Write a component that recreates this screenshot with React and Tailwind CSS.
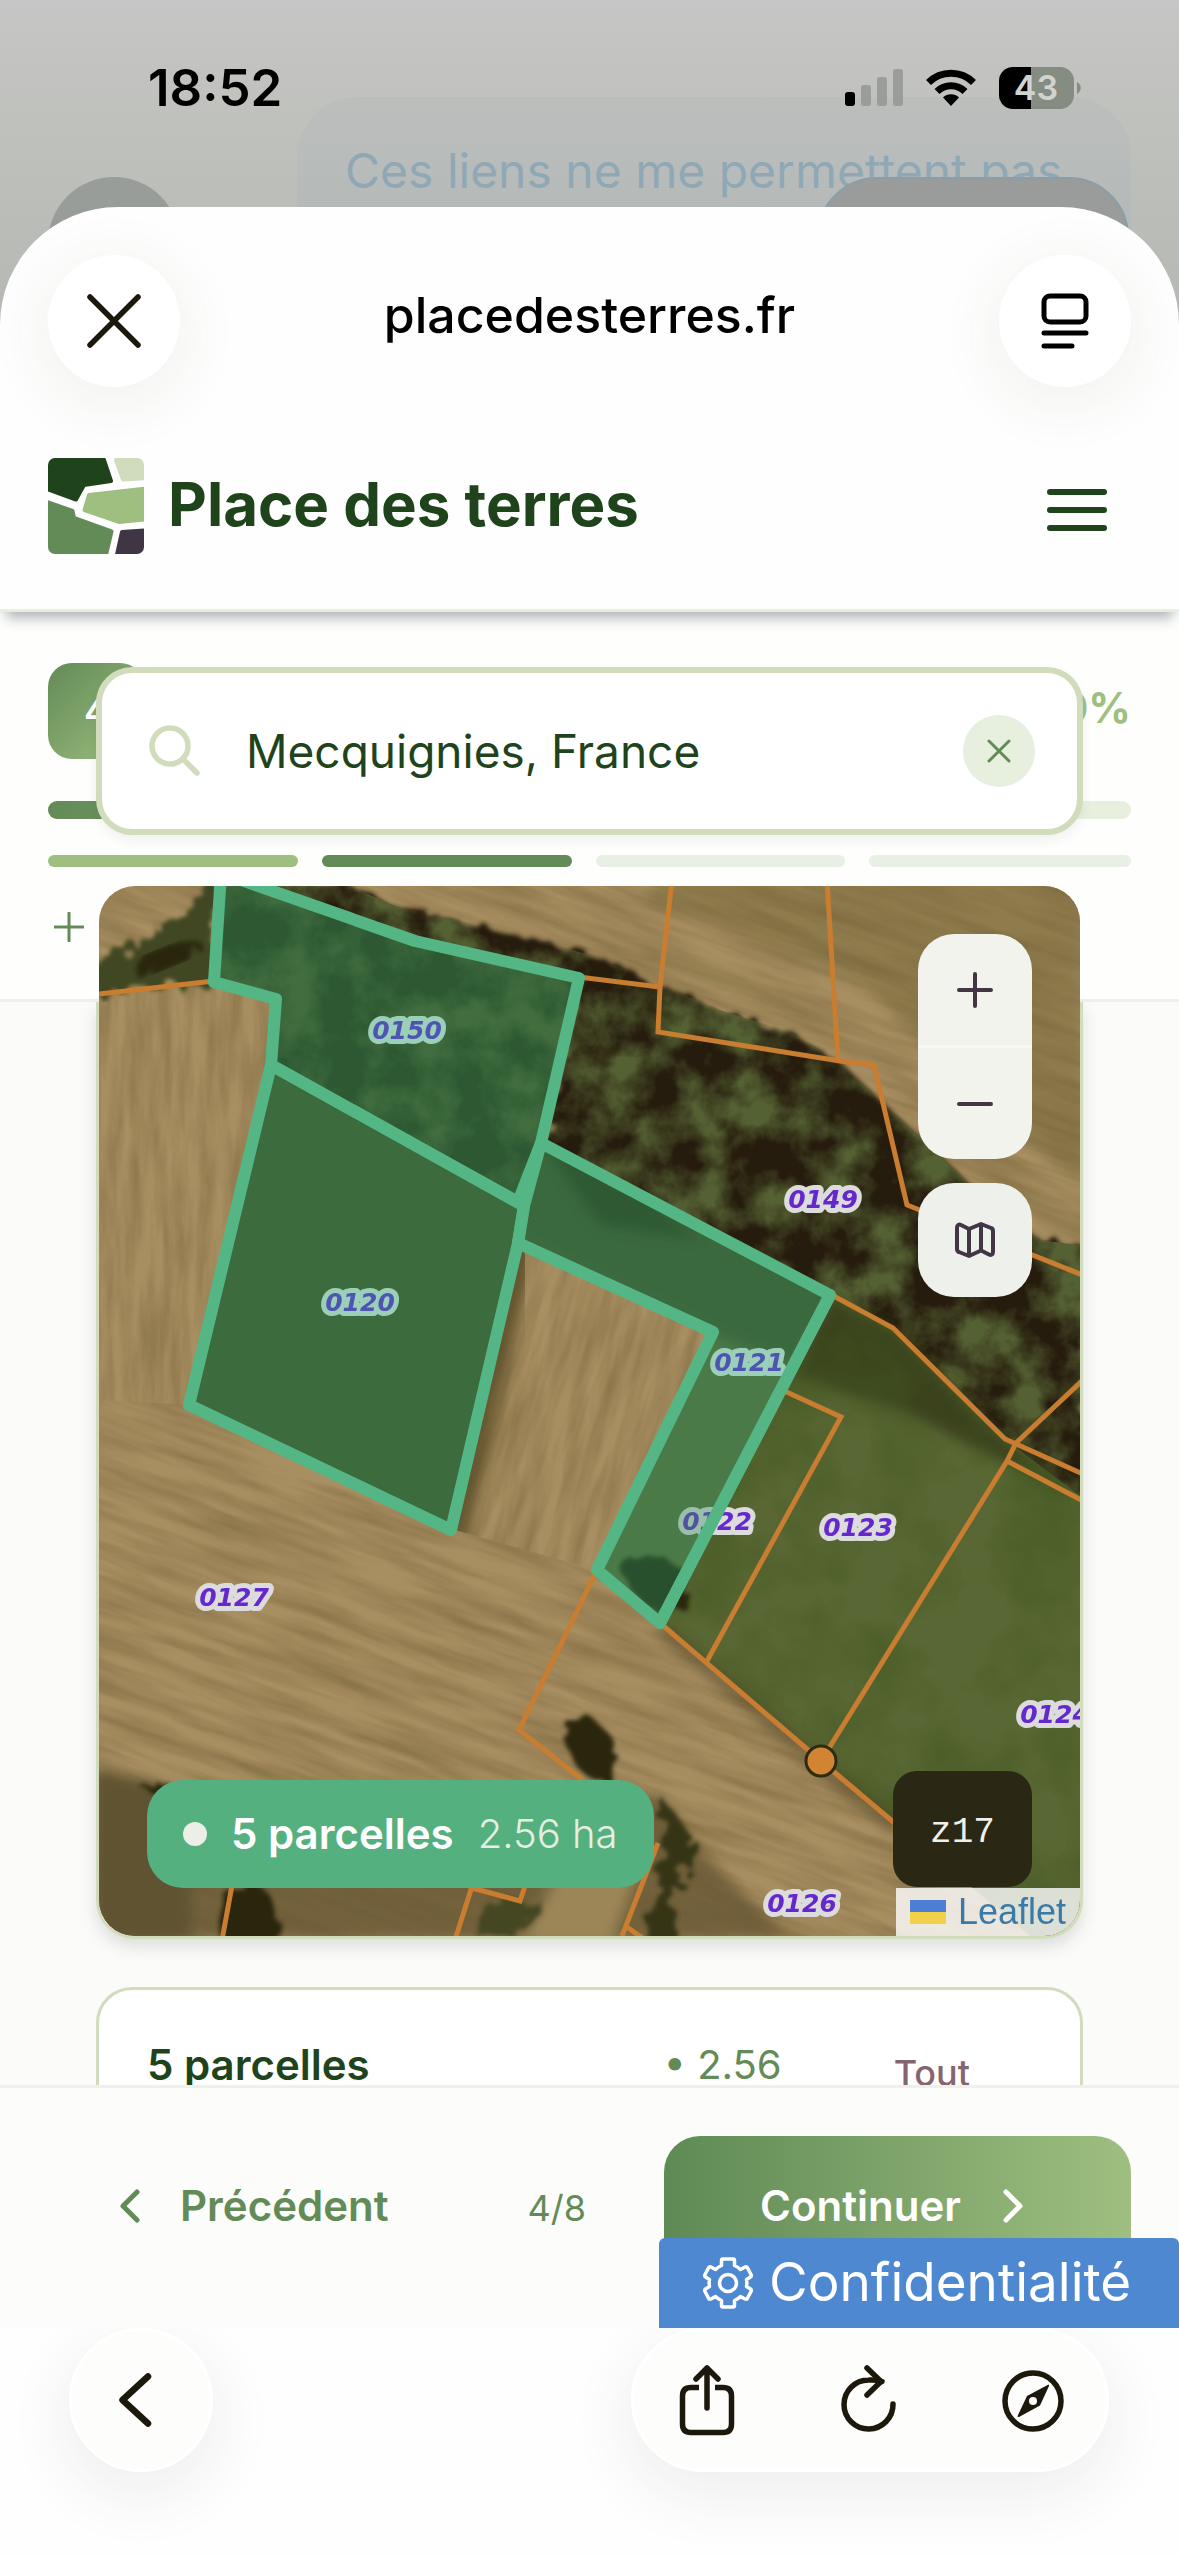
import React from "react";

const FONT = "font-['Inter',sans-serif]";

function StatusBar() {
  return (
    <div className="flex h-[207px] items-start justify-between pl-[148px] pr-[98px] pt-[58px] text-black">
      <span className="text-[51px] font-semibold leading-[60px]">18:52</span>
      <div className="flex h-[60px] items-center gap-[22px]">
        <svg width="58" height="38" viewBox="0 0 58 38">
          <rect x="0" y="23" width="10" height="14" rx="3" fill="#000" />
          <rect x="16" y="16" width="10" height="21" rx="3" fill="#9a9d99" />
          <rect x="32" y="8" width="10" height="29" rx="3" fill="#9a9d99" />
          <rect x="48" y="0" width="10" height="37" rx="3" fill="#9a9d99" />
        </svg>
        <svg width="52" height="38" viewBox="0 0 52 38" fill="none" stroke="#000" strokeWidth="7">
          <path d="M3.500 13.500a32 32 0 0 1 45 0" />
          <path d="M12 22.500a20 20 0 0 1 28 0" />
          <path d="M26 37l-8-8.500a11.500 11.500 0 0 1 16 0z" fill="#000" stroke="none" />
        </svg>
        <svg width="82" height="42" viewBox="0 0 82 42">
          <path d="M14 0H32V42H14A14 14 0 0 1 0 28V14A14 14 0 0 1 14 0Z" fill="#000" />
          <path d="M32 0H61A14 14 0 0 1 75 14V28A14 14 0 0 1 61 42H32Z" fill="#858c82" />
          <path d="M78 15c5 3 5 9 0 12z" fill="#858c82" />
          <text x="37" y="33" textAnchor="middle" fontFamily="Inter, sans-serif" fontSize="34" fontWeight="600" fill="#d0d3ce">43</text>
        </svg>
      </div>
    </div>
  );
}

function Backdrop() {
  return (
    <div className="absolute inset-x-0 top-0 h-[420px] overflow-hidden bg-linear-to-b from-[#c6c6c6] via-[#bfc1bc] via-30% to-[#b0b3af]" aria-hidden="true">
      <div className="ml-[297px] mr-[48px] mt-[97px] h-[300px] rounded-[60px] bg-linear-to-b from-[#bcbebc] to-[#a8b4b5] pl-[48px] pt-[42px]">
        <p className="whitespace-nowrap text-[48px] leading-[64px] text-[#8fa8b5]">Ces liens ne me permettent pas</p>
      </div>
      <div className="absolute left-[48px] top-[177px] h-[132px] w-[132px] rounded-full bg-[#999d99]" />
      <div className="absolute right-[50px] top-[177px] h-[132px] w-[312px] rounded-[60px] border-2 border-[#8b9ea8] bg-[#999c9b]" />
    </div>
  );
}

function BrowserBar() {
  return (
    <div className="flex h-[195px] shrink-0 items-start justify-between px-[48px] pt-[48px]">
      <button aria-label="Fermer" className="flex h-[132px] w-[132px] items-center justify-center rounded-full bg-white shadow-[0_12px_60px_10px_rgba(60,60,40,0.06)]">
        <svg width="56" height="56" viewBox="0 0 56 56" stroke="#1c190c" strokeWidth="5.500" strokeLinecap="round">
          <path d="M4 4L52 52M52 4L4 52" />
        </svg>
      </button>
      <span className="text-[50px] font-medium leading-[120px] text-black">placedesterres.fr</span>
      <button aria-label="Lecteur" className="flex h-[132px] w-[132px] items-center justify-center rounded-full bg-white shadow-[0_12px_60px_10px_rgba(60,60,40,0.06)]">
        <svg width="48" height="56" viewBox="0 0 48 56" fill="none" stroke="#000" strokeWidth="5" strokeLinecap="round">
          <rect x="3" y="3" width="42" height="26" rx="6" />
          <path d="M3 40H45M3 53H31" />
        </svg>
      </button>
    </div>
  );
}

function Logo() {
  return (
    <svg width="96" height="96" viewBox="48 459 96 96" strokeLinejoin="round" strokeWidth="4">
      <defs>
        <clipPath id="logoClip"><rect x="48" y="459" width="96" height="96" rx="7" /></clipPath>
      </defs>
      <g clipPath="url(#logoClip)">
        <path d="M44 455H102L111 482L84 486L76 500.500L44 489Z" fill="#1f441c" stroke="#1f441c" />
        <path d="M116 461L150 455V479L123 480.500Z" fill="#d0dcbc" stroke="#d0dcbc" />
        <path d="M89 496L150 489V520L119.500 523L84.500 511Z" fill="#9ebf80" stroke="#9ebf80" />
        <path d="M44 502L72.500 512L74 519L111.500 532.500L105 560H44Z" fill="#638b57" stroke="#638b57" />
        <path d="M122 533L150 531V560H116Z" fill="#403545" stroke="#403545" />
      </g>
    </svg>
  );
}

function SiteHeader() {
  return (
    <header className="relative z-10 flex h-[210px] shrink-0 items-center justify-between border-b-[3px] border-[#e7eee0] px-[48px] shadow-[0_12px_12px_-6px_rgba(30,40,50,0.35)]">
      <a href="#" className="flex items-center gap-6">
        <Logo />
        <span className="pb-1 text-[60px] font-bold leading-[72px] text-[#1f441c]">Place des terres</span>
      </a>
      <button aria-label="Menu" className="mr-[24px] mt-[9px]">
        <svg width="60" height="42" viewBox="0 0 60 42" stroke="#1f441c" strokeWidth="6" strokeLinecap="round">
          <path d="M3 3H57M3 21H57M3 39H57" />
        </svg>
      </button>
    </header>
  );
}

function Steps() {
  return (
    <section className="flex h-[390px] flex-col border-b-[3px] border-[#efefeb] bg-[#fefefd] px-[48px] pt-[51px] [grid-area:1/1]">
      <div className="flex h-[96px] items-center justify-between">
        <span className="flex h-[96px] w-[96px] items-center justify-center rounded-[24px] bg-linear-to-br from-[#638b57] to-[#9ebf80] text-[36px] font-semibold text-white">4</span>
        <span className="pb-[6px] text-[42px] font-bold leading-[50px] text-[#9ebf80]">50%</span>
      </div>
      <div className="mt-[42px] h-[18px] rounded-full bg-[#e7efdf]">
        <div className="h-full w-1/2 rounded-full bg-linear-to-r from-[#638b57] to-[#9ebf80]" />
      </div>
      <div className="mt-[36px] grid grid-cols-[250fr_250fr_250fr_262fr] gap-6">
        <div className="h-[12px] rounded-full bg-[#9ebf80]" />
        <div className="h-[12px] rounded-full bg-[#638b57]" />
        <div className="h-[12px] rounded-full bg-[#e8efe4]" />
        <div className="h-[12px] rounded-full bg-[#e8efe4]" />
      </div>
      <button aria-label="Ajouter" className="mt-[45px] w-[42px] pl-[6px]">
        <svg width="30" height="30" viewBox="0 0 30 30" stroke="#638b57" strokeWidth="3" strokeLinecap="round">
          <path d="M15 1V29M1 15H29" />
        </svg>
      </button>
    </section>
  );
}

function SearchBox() {
  return (
    <div className="flex h-[168px] items-center rounded-[36px] border-[6px] border-[#d0dcbc] bg-white pl-[46px] pr-[42px] shadow-[0_6px_12px_rgba(40,50,30,0.06)]">
      <svg width="54" height="54" viewBox="0 0 54 54" fill="none" stroke="#d0dcbc" strokeWidth="5.500" strokeLinecap="round">
        <circle cx="22" cy="22" r="18" />
        <path d="M35 35L49 49" />
      </svg>
      <input type="text" aria-label="Adresse" defaultValue="Mecquignies, France" className="ml-[44px] w-0 flex-1 bg-transparent text-[46px] text-[#1f441c] outline-none" />
      <button aria-label="Effacer" className="flex h-[72px] w-[72px] items-center justify-center rounded-full bg-[#e7efdf]">
        <svg width="24" height="24" viewBox="0 0 24 24" stroke="#638b57" strokeWidth="3" strokeLinecap="round">
          <path d="M2 2L22 22M22 2L2 22" />
        </svg>
      </button>
    </div>
  );
}

const LABELS = [
  ["0150", 407, 1039, true], ["0120", 360, 1311, true], ["0121", 749, 1371, true],
  ["0149", 823, 1208, false], ["0122", 717, 1530, false], ["0123", 858, 1536, false],
  ["0127", 234, 1606, false], ["0124", 1055, 1723, false], ["0126", 802, 1912, false],
];

const PARCELS = [
  "221,873 214,982 276,999 271,1065 518,1202 541,1143 579,978 415,941",
  "271,1065 524,1206 518,1243 451,1530 189,1405",
  "541,1143 830,1295 660,1623 597,1570 713,1332 518,1243 524,1206",
];

const BORDERS = [
  "M99 994L214 981", "M579 977L660 987", "M672 880L660 987L658 1032L840 1061L874 1065L907 1205L930 1214",
  "M827 880L838 1061", "M1020 1250L1085 1276", "M830 1294L893 1328L1005 1439L1085 1475",
  "M1085 1378L1016 1443L1007 1461L821 1761", "M1007 1461L1085 1502", "M780 1389L841 1417L707 1661",
  "M660 1623L821 1761L910 1836", "M597 1570L519 1730L580 1778L600 1800", "M233 1880L222 1940",
  "M474 1880L455 1940", "M472 1888L520 1901L527 1880", "M658 1843L622 1936M627 1927L645 1940",
];

function MapLabel({ text, x, y, tinted }) {
  return (
    <text x={x} y={y} textAnchor="middle" fontFamily="'DejaVu Sans', sans-serif" fontWeight="700" fontStyle="italic" fontSize="25" fill={tinted ? "#4d55b0" : "#6528cf"} stroke={tinted ? "#9ccfba" : "#dcdcdc"} strokeWidth="10" strokeLinejoin="round" paintOrder="stroke">
      {text}
    </text>
  );
}

const FOREST = "M335 880L400 908L500 930L590 955L660 985L720 1010L790 1032L840 1062L890 1110L950 1165L1000 1215L1040 1240L1085 1246V1500L1000 1445L830 1300L541 1146L579 978L415 941L221 880Z";

function Terrain() {
  return (
    <svg className="block h-full w-full" viewBox="99 886 981 1050" preserveAspectRatio="xMidYMid slice" role="img" aria-label="Carte cadastrale">
      <defs>
        <filter id="furrow" x="0" y="0" width="100%" height="100%" colorInterpolationFilters="sRGB">
          <feTurbulence type="fractalNoise" baseFrequency="0.008 0.07" numOctaves="4" seed="4" />
          <feColorMatrix values="0 0 0 0 0.46  0 0 0 0 0.38  0 0 0 0 0.22  1.800 0 0 0 -0.550" />
        </filter>
        <filter id="furrowV" x="0" y="0" width="100%" height="100%" colorInterpolationFilters="sRGB">
          <feTurbulence type="fractalNoise" baseFrequency="0.07 0.01" numOctaves="4" seed="9" />
          <feColorMatrix values="0 0 0 0 0.46  0 0 0 0 0.38  0 0 0 0 0.22  1.800 0 0 0 -0.550" />
        </filter>
        <filter id="leaves" x="0" y="0" width="100%" height="100%" colorInterpolationFilters="sRGB">
          <feTurbulence type="fractalNoise" baseFrequency="0.022" numOctaves="5" seed="12" />
          <feColorMatrix values="0 0 0 0 0.33  0 0 0 0 0.38  0 0 0 0 0.2  2.600 0 0 0 -0.900" />
        </filter>
        <filter id="grass" x="0" y="0" width="100%" height="100%" colorInterpolationFilters="sRGB">
          <feTurbulence type="fractalNoise" baseFrequency="0.012" numOctaves="4" seed="3" />
          <feColorMatrix values="0 0 0 0 0.26  0 0 0 0 0.34  0 0 0 0 0.13  2 0 0 0 -0.850" />
        </filter>
        <filter id="soft" x="-10%" y="-10%" width="120%" height="120%"><feGaussianBlur stdDeviation="7" /></filter>
        <filter id="edge" x="-5%" y="-5%" width="110%" height="110%">
          <feTurbulence type="fractalNoise" baseFrequency="0.05" numOctaves="2" result="n" />
          <feDisplacementMap in="SourceGraphic" in2="n" scale="30" />
          <feGaussianBlur stdDeviation="2" />
        </filter>
        <clipPath id="forestClip"><path d={FOREST} /></clipPath>
        <clipPath id="copseClip"><path d="M221 873L214 982L276 999L271 1065L518 1202L541 1143L579 978L415 941Z" /></clipPath>
        <clipPath id="fieldClip"><path d="M830 1295L893 1328L1005 1439L1085 1500V1940H1035L821 1761L660 1623Z" /></clipPath>
        <clipPath id="stripClip"><path d={`M${PARCELS[2].split(" ").join("L")}Z`} /></clipPath>
        <clipPath id="westClip"><path d="M99 994L214 982L276 999L271 1065L189 1405L99 1400Z" /></clipPath>
        <clipPath id="midClip"><path d="M518 1243L713 1332L597 1570L455 1530Z" /></clipPath>
      </defs>

      <rect x="99" y="886" width="981" height="1050" fill="#a88f62" />
      <path d="M650 880H1085V1240L1000 1190L860 1030L640 960Z" fill="#8f7b4e" filter="url(#soft)" />
      <path d="M560 905L700 940L860 1010L960 1110L1085 1215" stroke="#a88f62" strokeWidth="40" fill="none" filter="url(#soft)" />
      <g transform="rotate(20 589 1411)"><rect x="-200" y="600" width="1600" height="1600" filter="url(#furrow)" opacity="0.55" /></g>
      <g clipPath="url(#westClip)">
        <rect x="99" y="980" width="200" height="430" fill="#a88f62" />
        <rect x="99" y="980" width="200" height="430" filter="url(#furrowV)" opacity="0.5" />
      </g>
      <g clipPath="url(#midClip)">
        <rect x="450" y="1230" width="280" height="350" fill="#a88f62" />
        <g transform="rotate(15 580 1400)"><rect x="350" y="1130" width="480" height="550" filter="url(#furrowV)" opacity="0.5" /></g>
        <path d="M518 1243L451 1540" stroke="#4c411f" strokeWidth="34" opacity="0.7" filter="url(#soft)" />
      </g>

      <path d="M205 880L190 910L95 968V996L214 981L221 880Z" fill="#3f4622" filter="url(#edge)" />
      <ellipse cx="165" cy="958" rx="38" ry="10" fill="#2b250f" filter="url(#edge)" transform="rotate(-22 165 958)" />

      <path d={FOREST} fill="#271f0c" filter="url(#edge)" />
      <g clipPath="url(#forestClip)"><rect x="200" y="880" width="890" height="640" filter="url(#leaves)" /></g>

      <path d="M830 1295L893 1328L1005 1439L1085 1500V1940H1035L821 1761L660 1623Z" fill="#586733" />
      <path d="M830 1295L893 1328L1005 1439L1085 1500L1000 1460L900 1410L790 1375Z" fill="#3a431e" filter="url(#soft)" />
      <g clipPath="url(#fieldClip)"><rect x="650" y="1290" width="440" height="650" filter="url(#grass)" opacity="0.7" /></g>
      <path d="M660 1628L821 1766L900 1830" stroke="#4c3f20" strokeWidth="14" opacity="0.6" filter="url(#soft)" fill="none" />

      <path d="M95 1770L150 1788L300 1800L660 1795L700 1850L790 1940H95Z" fill="#675732d0" filter="url(#soft)" />
      <path d="M95 1771L160 1786L190 1800V1940H95Z" fill="#5f5230" filter="url(#soft)" />
      <path d="M560 1870H640L610 1945H520Z" fill="#9c8658" filter="url(#soft)" />
      <g fill="#2b250f" filter="url(#edge)">
        <ellipse cx="248" cy="1925" rx="30" ry="42" />
        <ellipse cx="588" cy="1752" rx="22" ry="34" transform="rotate(-30 582 1745)" />
        <ellipse cx="156" cy="1787" rx="14" ry="6" />
        <path d="M660 1795L695 1840L690 1860L672 1890L675 1940L640 1940L662 1870Z" fill="#353418" />
        <path d="M485 1900L545 1904L525 1929L475 1934Z" fill="#454622" />
        <ellipse cx="665" cy="1590" rx="26" ry="16" />
      </g>

      <g fill="none" stroke="#c97d30" strokeWidth="5">
        {BORDERS.map((d) => <path key={d} d={d} />)}
      </g>

      <g clipPath="url(#copseClip)">
        <rect x="200" y="880" width="390" height="330" fill="#283316" />
        <rect x="200" y="880" width="390" height="330" filter="url(#leaves)" opacity="0.8" />
      </g>
      <polygon points={PARCELS[1]} fill="#415229" />
      <g clipPath="url(#stripClip)">
        <rect x="500" y="1130" width="350" height="510" fill="#5a6c3d" />
        <path d="M541 1120L850 1270L800 1370L713 1335L500 1235Z" fill="#3f5029" filter="url(#soft)" />
        <path d="M540 1140L640 1190L700 1240L600 1225Z" fill="#2a3518" filter="url(#soft)" />
        <path d="M620 1566L645 1552L695 1570L700 1580L674 1626L640 1600Z" fill="#222810" filter="url(#edge)" />
      </g>
      {LABELS.filter((l) => !l[3]).map(([text, x, y, tinted]) => <MapLabel key={text} text={text} x={x} y={y} tinted={tinted} />)}
      <g fill="#35905c" fillOpacity="0.4" stroke="#55b685" strokeWidth="12" strokeLinejoin="round">
        {PARCELS.map((p) => <polygon key={p} points={p} />)}
      </g>
      {LABELS.filter((l) => l[3]).map(([text, x, y, tinted]) => <MapLabel key={text} text={text} x={x} y={y} tinted={tinted} />)}
      <path d="M830 1295L660 1623" stroke="#55b685" strokeWidth="12" strokeLinecap="round" />
      <circle cx="821" cy="1761" r="15" fill="#d18432" stroke="#2c2c12" strokeWidth="3" />
    </svg>
  );
}

function MapCard() {
  return (
    <div className="relative mt-[48px] rounded-[36px] p-[3px]">
      <div className="absolute inset-x-0 bottom-0 top-[119px] rounded-b-[38px] border-x-[3px] border-b-[3px] border-[#d0dcbc] shadow-[0_8px_16px_rgba(40,50,30,0.14)]" />
      <div className="relative aspect-[981/1050] overflow-hidden rounded-[36px]">
        <Terrain />
        <div className="absolute right-[48px] top-[48px] flex w-[114px] flex-col gap-6">
          <div className="flex flex-col overflow-hidden rounded-[36px] bg-[#f2f3ed]">
            <button aria-label="Zoomer" className="flex h-[114px] items-center justify-center border-b-[3px] border-[#f8f9f5]">
              <svg width="40" height="40" viewBox="0 0 40 40" stroke="#413546" strokeWidth="4" strokeLinecap="round"><path d="M20 4V36M4 20H36" /></svg>
            </button>
            <button aria-label="Dézoomer" className="flex h-[111px] items-center justify-center">
              <svg width="40" height="40" viewBox="0 0 40 40" stroke="#413546" strokeWidth="4" strokeLinecap="round"><path d="M4 20H36" /></svg>
            </button>
          </div>
          <button aria-label="Fond de carte" className="flex h-[114px] items-center justify-center rounded-[36px] bg-[#eef0eb]">
            <svg width="42" height="38" viewBox="0 0 42 38" fill="none" stroke="#413546" strokeWidth="4" strokeLinejoin="round">
              <path d="M3 6.500C3 4 5 3 7 4L15 8L27 3L37 7C38.500 7.500 39 8.500 39 10V31C39 33.500 37 34.500 35 33.500L27 29.500L15 35L5 31C3.500 30.500 3 29.500 3 28Z" />
              <path d="M15 8V35M27 3V29.500" />
            </svg>
          </button>
        </div>
        <div className="absolute bottom-[48px] left-[48px] flex h-[108px] items-center rounded-[36px] bg-[#54b07f] px-[36px] leading-[54px]">
          <span className="h-[24px] w-[24px] rounded-full bg-[#eceee8]" />
          <span className="ml-6 whitespace-nowrap text-[42px] font-semibold text-white">5 parcelles</span>
          <span className="ml-6 whitespace-nowrap text-[40px] font-light text-[#e6efe2]">2.56 ha</span>
        </div>
        <div className="absolute bottom-[49px] right-[48px] flex h-[116px] w-[139px] items-center justify-center rounded-[24px] bg-[#2a2814] pt-2 font-['Liberation_Mono',monospace] text-[36px] text-[#f0f0ea]">z17</div>
        <div className="absolute bottom-0 right-0 flex h-[48px] items-center gap-3 bg-white/80 px-[14px] font-['Liberation_Sans',sans-serif] text-[36px]">
          <svg width="36" height="24" viewBox="0 0 36 24"><rect width="36" height="12" fill="#4c7fd3" /><rect y="12" width="36" height="12" fill="#f2d04a" /></svg>
          <a href="#" className="leading-[48px] text-[#3a7aa8]">Leaflet</a>
        </div>
      </div>
    </div>
  );
}

function ParcelsCard() {
  return (
    <div className="mt-[48px] h-[300px] rounded-[36px] border-[3px] border-[#d0dcbc] bg-white px-[48px] pt-[48px]">
      <div className="flex items-start leading-[54px]">
        <span className="flex-1 text-[42px] font-semibold text-[#1f441c]">5 parcelles</span>
        <span className="text-[40px] text-[#638b57]">• 2.56</span>
        <button className="ml-[112px] mr-[62px] pt-[8px] text-[36px] font-medium text-[#85656f]">Tout</button>
      </div>
    </div>
  );
}

function BottomBar() {
  return (
    <div className="relative z-10 h-[243px] shrink-0 overflow-hidden border-t-[3px] border-[#eef0ea] bg-[#fcfcfb]">
      <div className="flex items-start px-[48px] pt-[48px]">
        <button className="flex h-[140px] items-center gap-[40px] pl-[72px] text-[42px] font-semibold leading-[54px] text-[#638b57]">
          <svg width="20" height="34" viewBox="0 0 20 34" fill="none" stroke="#638b57" strokeWidth="5" strokeLinecap="round" strokeLinejoin="round"><path d="M17 3L3 17L17 31" /></svg>
          Précédent
        </button>
        <span className="flex-1 pr-[78px] text-right text-[36px] leading-[144px] text-[#638b57]">4/8</span>
        <button className="flex h-[140px] w-[467px] items-center justify-center gap-[42px] rounded-[36px] bg-linear-to-r from-[#5f8a55] to-[#9ebf80] pr-3 text-[42px] font-semibold leading-[54px] text-white">
          Continuer
          <svg width="20" height="34" viewBox="0 0 20 34" fill="none" stroke="#fff" strokeWidth="5" strokeLinecap="round" strokeLinejoin="round"><path d="M3 3L17 17L3 31" /></svg>
        </button>
      </div>
      <button className="absolute bottom-0 right-0 flex h-[90px] w-[520px] items-center gap-4 rounded-t-[6px] bg-[#4d88d0] pl-[44px] text-[53px] text-white">
        <svg className="shrink-0" width="50" height="52" viewBox="0 0 50 52" fill="none" stroke="#fff" strokeWidth="3.500" strokeLinejoin="round">
          <circle cx="25" cy="26" r="8.500" />
          <path d="M18.500 3.500Q18.500 2 20 2H30Q31.500 2 31.500 3.500V8.500Q35 10 37.500 12.500L42 10Q43.500 9.300 44.300 10.500L48 17.500Q48.800 19 47.500 20L43.500 22.500Q44.200 26 43.500 29.500L47.500 32Q48.800 33 48 34.500L44.300 41.500Q43.500 42.700 42 42L37.500 39.500Q35 42 31.500 43.500V48.500Q31.500 50 30 50H20Q18.500 50 18.500 48.500V43.500Q15 42 12.500 39.500L8 42Q6.500 42.700 5.700 41.500L2 34.500Q1.200 33 2.500 32L6.500 29.500Q5.800 26 6.500 22.500L2.500 20Q1.200 19 2 17.500L5.700 10.500Q6.500 9.300 8 10L12.500 12.500Q15 10 18.500 8.500Z" />
        </svg>
        Confidentialité
      </button>
    </div>
  );
}

function Toolbar() {
  return (
    <nav className="flex h-[228px] shrink-0 items-start justify-between bg-[#fefefe] pl-[69px] pr-[70px]">
      <button aria-label="Retour" className="flex h-[144px] w-[144px] items-center justify-center rounded-full border-[3px] border-white bg-[#fdfdfb] pr-3 shadow-[0_20px_60px_6px_rgba(60,60,60,0.08)]">
        <svg width="34" height="56" viewBox="0 0 34 56" fill="none" stroke="#1c190c" strokeWidth="6.500" strokeLinecap="round" strokeLinejoin="round"><path d="M30 4.500L4.500 28L30 51.500" /></svg>
      </button>
      <div className="flex h-[144px] w-[478px] items-center justify-between rounded-full border-[3px] border-white bg-[#fdfdfb] px-[42px] shadow-[0_20px_60px_6px_rgba(60,60,60,0.08)]">
        <button aria-label="Partager">
          <svg width="62" height="72" viewBox="0 0 62 72" fill="none" stroke="#1c190c" strokeWidth="5.500" strokeLinecap="round" strokeLinejoin="round">
            <path d="M31 44V4M20 15L31 4L42 15" />
            <path d="M23 23.500H15Q6.500 23.500 6.500 32V60Q6.500 68.500 15 68.500H47Q55.500 68.500 55.500 60V32Q55.500 23.500 47 23.500H39" strokeLinecap="butt" />
          </svg>
        </button>
        <button aria-label="Recharger">
          <svg width="62" height="72" viewBox="0 0 62 72" fill="none" stroke="#1c190c" strokeWidth="5.500" strokeLinecap="round" strokeLinejoin="round">
            <path d="M54 40A24.500 24.500 0 1 1 29.500 16Q37 15.500 43 17.500" />
            <path d="M28 4L42 17.500L28 31" />
          </svg>
        </button>
        <button aria-label="Ouvrir dans Safari">
          <svg width="62" height="72" viewBox="0 0 62 72" fill="none" stroke="#1c190c" strokeWidth="5.500">
            <circle cx="31" cy="37" r="28" />
            <path d="M46.500 20.500Q47.500 21 47 22L38 41.500L17 53Q15 53.500 15.800 51.500L25 32Z" fill="#1c190c" stroke="none" />
            <circle cx="31" cy="37" r="4" fill="#fdfdfb" stroke="none" />
          </svg>
        </button>
      </div>
    </nav>
  );
}

export default function App() {
  return (
    <div className={`${FONT} relative flex h-screen flex-col overflow-hidden`}>
      <Backdrop />
      <div className="relative shrink-0"><StatusBar /></div>
      <div className="relative flex min-h-0 flex-1 flex-col overflow-hidden rounded-t-[118px] bg-[#fefefe]">
        <BrowserBar />
        <SiteHeader />
        <main className="grid min-h-0 flex-1 auto-rows-max overflow-hidden bg-[#fbfbfa]">
          <Steps />
          <div className="z-[1] px-24 pt-[55px] [grid-area:1/1]">
            <SearchBox />
            <MapCard />
            <ParcelsCard />
          </div>
        </main>
        <BottomBar />
        <Toolbar />
      </div>
    </div>
  );
}
